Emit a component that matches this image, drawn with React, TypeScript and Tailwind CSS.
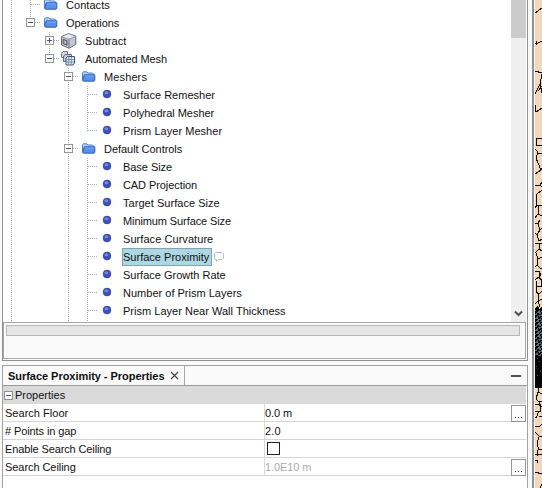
import React from "react";

type IconKind = "folder" | "cube" | "mesh" | "dot";
// Guide cells: v = through line, e = empty, t = tee, l = last, x = closed box,
// m = open box ending its line, b = open box on a through line
type Row = { guides: string; icon: IconKind; label: string; tracking: string; selected?: boolean };

const rows: Row[] = [
  { guides: "vt", icon: "folder", label: "Contacts", tracking: "tracking-[0.05px]" },
  { guides: "vm", icon: "folder", label: "Operations", tracking: "tracking-[-0.05px]" },
  { guides: "vex", icon: "cube", label: "Subtract", tracking: "tracking-[0.05px]" },
  { guides: "vem", icon: "mesh", label: "Automated Mesh", tracking: "tracking-[-0.08px]" },
  { guides: "veeb", icon: "folder", label: "Meshers", tracking: "tracking-[0.12px]" },
  { guides: "veevt", icon: "dot", label: "Surface Remesher", tracking: "tracking-[0.02px]" },
  { guides: "veevt", icon: "dot", label: "Polyhedral Mesher", tracking: "tracking-[-0.03px]" },
  { guides: "veevl", icon: "dot", label: "Prism Layer Mesher", tracking: "tracking-[0.04px]" },
  { guides: "veeb", icon: "folder", label: "Default Controls", tracking: "tracking-[-0.04px]" },
  { guides: "veevt", icon: "dot", label: "Base Size", tracking: "tracking-[-0.05px]" },
  { guides: "veevt", icon: "dot", label: "CAD Projection", tracking: "tracking-[-0.08px]" },
  { guides: "veevt", icon: "dot", label: "Target Surface Size", tracking: "tracking-[0.04px]" },
  { guides: "veevt", icon: "dot", label: "Minimum Surface Size", tracking: "tracking-[-0.1px]" },
  { guides: "veevt", icon: "dot", label: "Surface Curvature", tracking: "tracking-[0.06px]" },
  { guides: "veevt", icon: "dot", label: "Surface Proximity", tracking: "tracking-[0.01px]", selected: true },
  { guides: "veevt", icon: "dot", label: "Surface Growth Rate", tracking: "tracking-[0px]" },
  { guides: "veevt", icon: "dot", label: "Number of Prism Layers", tracking: "tracking-[0.01px]" },
  { guides: "veevt", icon: "dot", label: "Prism Layer Near Wall Thickness", tracking: "tracking-[0.02px]" },
];

function Guide({ kind }: { kind: string }) {
  const vertical = kind === "e" ? "" : kind === "l" || kind === "m" ? "M9.5 0V9" : "M9.5 0V18";
  const horizontal = "tlxmb".includes(kind) ? "M10 8.5H19" : "";
  return (
    <svg className="block shrink-0" width="19" height="18" fill="none" shapeRendering="crispEdges">
      <path d={vertical} stroke="#aaa" strokeDasharray="1 1" />
      <path d={horizontal} stroke="#aaa" strokeDasharray="1 1" />
      {"xmb".includes(kind) && (
        <>
          <rect x="5.5" y="4.5" width="8" height="8" fill="#fbfbfb" stroke="#96969a" />
          <path d={kind === "x" ? "M7 8.5H12M9.5 6V11" : "M7 8.5H12"} stroke="#47537d" />
        </>
      )}
    </svg>
  );
}

function NodeIcon({ kind }: { kind: IconKind }) {
  return (
    <svg className="block shrink-0" width="26" height="18" viewBox="0 0 26 18" fill="none">
      {kind === "folder" && (
        <>
          <path d="M4.5 12.5V4.5L5.2 3.8H8.8L10 5H14.5L15.5 6V7.5" fill="#b4d2f7" stroke="#5380cc" />
          <path d="M4.7 12L6.3 6.8H16.8V12.2L16 13.2H5.5Z" fill="#5790ea" stroke="#2f5dbd" />
          <path d="M7 8H16.2" stroke="#7cabf5" />
        </>
      )}
      {kind === "cube" && (
        <>
          <path d="M2.5 4.7L9.5 1.6L16.8 4.2V12.3L10.2 16.3L2.5 13Z" fill="#c3c5d1" stroke="#686a79" />
          <path d="M2.5 4.7L9.5 1.6L16.8 4.2L10 7.4Z" fill="#e8e9ef" stroke="#777988" strokeWidth=".7" />
          <path d="M10 7.4V16" stroke="#737584" />
          <path d="M4.2 7.2L8 8.8V13.2L4.2 11.5Z" fill="#9b9dab" stroke="#55576a" />
          <path d="M5.8 9.2L7 9.8V11.5L5.8 11Z" fill="#dcdde5" />
        </>
      )}
      {kind === "mesh" && (
        <>
          <path d="M2.5 3.5L4 1.5H8.5V6L7 7.5H2.5Z" fill="#d5d8e0" stroke="#6c7386" />
          <path d="M4.5 6L6.5 4.5H12.5V9L11 11.5H4.5Z" fill="#c3c8d5" stroke="#626b82" />
          <path d="M7 8L8.5 6.5H15.5V13L14 15H7Z" fill="#dce7f3" stroke="#46536f" />
          <path d="M7.5 9.5H15M7.5 12H15M9.7 7V14.5M12.3 7V14.5" stroke="#6c83a6" strokeWidth=".8" />
        </>
      )}
      {kind === "dot" && (
        <>
          <circle cx="10" cy="8" r="3.9" fill="#3c50bb" stroke="#293994" strokeWidth=".6" />
          <ellipse cx="9.4" cy="6.8" rx="2" ry="1.5" fill="#7287dc" />
        </>
      )}
    </svg>
  );
}

function TreeRow({ row }: { row: Row }) {
  return (
    <div className="flex h-[18px] shrink-0 items-center">
      {row.guides.split("").map((kind, i) => (
        <Guide key={i} kind={kind} />
      ))}
      <NodeIcon kind={row.icon} />
      <span
        className={`${row.tracking} whitespace-nowrap ${
          row.selected
            ? "-ml-px h-[18px] w-[90px] border border-[#82a5ad] bg-[#add8e3] leading-[17px]"
            : "leading-[18px]"
        }`}
      >
        {row.label}
      </span>
      {row.selected && (
        <svg className="ml-px block" width="12" height="12" fill="none">
          <path d="M2.5 1.5H9L10.5 3V7L9 8.5H5.5L3.5 10.5V8.5H2L1.5 7V2.5Z" fill="#fff" stroke="#b3bdd6" />
        </svg>
      )}
    </div>
  );
}

const speckles = Array.from({ length: 46 }, (_, i) => {
  const y = 310 + i;
  return `M${(i * 3) % 4} ${y}.5h${1 + (i % 3)}M${4 + ((i * 2) % 3)} ${y}.5h${1 + ((i * 5) % 2)}`;
}).join("");

function MeshView() {
  return (
    <svg className="block shrink-0" width="7" height="488" shapeRendering="crispEdges" fill="none">
      <path d="M0 0H7V488H0Z" fill="#f2d8bb" />
      <path
        stroke="#150d0a"
        d="M0 13L7 8M0 43H3L7 41M1 41V45M0 71L7 73M7 74L5 84L0 94M5 84L7 93M7 86L3 91M0 105L1 112L7 108M7 138H1V145H7M0 149L3 152L1 158L3 163L6 170L7 168M7 153H3M6 170L0 174M0 185H5L7 187M5 185L7 182M7 190L2 194L1 202L2 205H7M2 205L0 208M3 205V214L0 218M3 214L7 216M0 223H3L5 220M3 223L5 230L7 228M5 230L2 235L0 233M2 235L4 241L7 239M0 243H7M4 243V249L7 251M4 249L0 253M1 253L3 259L7 257M3 259L2 265L0 267M2 265L6 269L7 268M0 272L4 271L6 276M4 271V277L0 280M4 277L7 281M1 281V286H6V281M1 286V292L4 294L7 291M4 294L3 301L7 299M3 301L0 304M3 301L5 307"
      />
      <path d="M0 308L3 305L4 309L7 306V388H0Z" fill="#050507" />
      <path d={speckles} stroke="#596977" />
      <path d="M2 358.5h1M4 361.5h1M1 366.5h1M5 371.5h1M2 375.5h1" stroke="#465461" />
      <path
        stroke="#150d0a"
        d="M3 387V392L7 394M3 392L1 399L4 402L7 401M4 402V406M0 404H5V411H0M5 406H7M4 411L1 418L0 417M4 417L7 416M0 426H5L7 424M0 432L5 437L7 436M4 437L2 443L4 450L7 449M2 450V456M0 454H7M0 460H3L2 463M0 472L7 474M7 484L5 488"
      />
    </svg>
  );
}

function MoreButton() {
  return (
    <button className="mt-px flex h-[17px] w-[15px] items-end justify-center border border-[#969696] bg-[#fcfcfc]">
      <svg className="mb-[3px]" width="9" height="2" shapeRendering="crispEdges">
        <path d="M1 1.5h1M4 1.5h1M7 1.5h1" stroke="#222" />
      </svg>
    </button>
  );
}

function Property({ name, tracking, children, more }: { name: string; tracking: string; children: React.ReactNode; more?: boolean }) {
  return (
    <div className="flex h-[18px] border-b border-[#d5d5d5] leading-[18px]">
      <div className={`w-[262px] border-r border-[#dcdad5] pl-[2px] ${tracking}`}>{name}</div>
      <div className="flex-1">{children}</div>
      {more && <MoreButton />}
    </div>
  );
}

export default function App() {
  return (
    <main className="flex h-[488px] w-[542px] overflow-hidden bg-[#fafafa] font-['Liberation_Sans',Arial,sans-serif] text-[11px] text-[#111]">
      <div className="flex w-[528px] shrink-0 flex-col pl-[2px]">
        <section className="flex h-[361px] flex-col border-x border-b border-[#909090]">
          <div className="flex h-[322px] overflow-hidden bg-white">
            <div className="-ml-px -mt-1 flex flex-1 flex-col">
              {rows.map((row) => (
                <TreeRow key={row.label} row={row} />
              ))}
              <div className="flex h-[2px] shrink-0 overflow-hidden">
                {"veevv".split("").map((kind, i) => (
                  <Guide key={i} kind={kind} />
                ))}
              </div>
            </div>
            <div className="mr-px flex w-[15px] flex-col justify-between bg-[#efefef]">
              <div className="h-[38px] bg-[#cbcbcb]" />
              <svg className="block" width="15" height="17" fill="none">
                <path d="M4 6.5L7.5 10L11 6.5" stroke="#505050" strokeWidth="2" />
              </svg>
            </div>
          </div>
          <div className="mb-px mr-px flex-1 border border-[#a7a7a7] bg-[#fafafa] pl-[2px] pt-[2px]">
            <div className="h-[11px] w-[514px] border border-[#b7b7b7] bg-[#e5e5e5]" />
          </div>
        </section>
        <section className="mt-1 flex flex-1 flex-col border-x border-t border-[#a0a0a0] bg-white">
          <header className="flex h-5 items-center border-b border-[#999] bg-[#fafafa]">
            <div className="flex h-full w-[182px] items-center border-r border-[#a7a7a7] pl-[5px]">
              <h2 className="w-[162px] whitespace-nowrap pt-px font-bold tracking-[-0.04px]">Surface Proximity - Properties</h2>
              <svg className="block" width="9" height="9" fill="none">
                <path d="M1 1L8 8M8 1L1 8" stroke="#454545" strokeWidth="1.2" />
              </svg>
            </div>
            <div className="ml-auto mr-[6px] h-[2px] w-[10px] bg-[#505050]" />
          </header>
          <div className="mr-px flex h-[18px] items-center bg-[#dadada]">
            <svg className="ml-px mr-px block" width="11" height="11" fill="none" shapeRendering="crispEdges">
              <path d="M.5 1.5H8.5V9.5H.5Z" fill="#fafafa" stroke="#909090" />
              <path d="M2 5.5H7" stroke="#43527f" />
            </svg>
            <span className="-ml-px">Properties</span>
          </div>
          <div className="mr-px">
            <Property name="Search Floor" tracking="tracking-[0.02px]" more>
              <span className="tracking-[-0.1px]">0.0 m</span>
            </Property>
            <Property name="# Points in gap" tracking="tracking-[-0.1px]">
              <span className="tracking-[0.2px]">2.0</span>
            </Property>
            <Property name="Enable Search Ceiling" tracking="tracking-[-0.12px]">
              <div className="ml-[2px] mt-[2px] h-[13px] w-[13px] border border-[#222] bg-white" />
            </Property>
            <Property name="Search Ceiling" tracking="tracking-[-0.06px]" more>
              <span className="text-[#ababab] tracking-[-0.1px]">1.0E10 m</span>
            </Property>
          </div>
        </section>
      </div>
      <div className="ml-[4px] mr-px w-[2px] shrink-0 bg-[#929292]" />
      <MeshView />
    </main>
  );
}
